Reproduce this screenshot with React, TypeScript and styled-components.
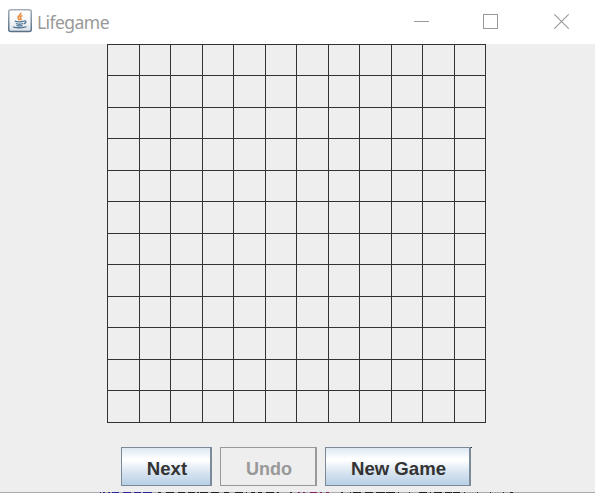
import React from "react";
import styled, { createGlobalStyle, css } from "styled-components";

const GlobalStyle = createGlobalStyle`
  html, body { margin: 0; padding: 0; overflow: hidden; background: #eee; }
`;

const Window = styled.div`
  display: flex;
  flex-direction: column;
  width: 595px;
  height: 493px;
  overflow: hidden;
  background: #eeeeee;
`;

const TitleBar = styled.header`
  display: flex;
  align-items: center;
  flex: 0 0 44px;
  box-sizing: border-box;
  height: 44px;
  padding-left: 8px;
  background: #fff;
`;

const JavaIcon = styled.svg`
  display: block;
  width: 24px;
  height: 24px;
  margin-top: -2px;
`;

const Title = styled.h1`
  flex: 1;
  margin: -1px 0 0 5px;
  font: 400 17.5px/24px "Noto Sans", "Open Sans", sans-serif;
  letter-spacing: -0.55px;
  color: #999;
`;

const WindowControls = styled.div`
  display: flex;
  height: 44px;
`;

const ControlButton = styled.button<{ $width: number }>`
  display: flex;
  align-items: center;
  justify-content: center;
  width: ${(p) => p.$width}px;
  height: 43px;
  padding: 0;
  border: 0;
  background: none;
  color: #999;
`;

const Board = styled.main`
  display: grid;
  grid-template-columns: repeat(6, 32px 31px);
  grid-template-rows: repeat(6, 31px 32px);
  align-self: flex-start;
  margin-left: 107px;
  border-right: 1px solid #333;
  border-bottom: 1px solid #333;
`;

const Cell = styled.div`
  border-left: 1px solid #333;
  border-top: 1px solid #333;
`;

const Actions = styled.div`
  display: flex;
  gap: 8px;
  margin: 24px 0 0 121px;
`;

const ActionButton = styled.button<{ $width: number }>`
  box-sizing: border-box;
  width: ${(p) => p.$width}px;
  height: 39px;
  padding: 5px 0 0 2px;
  border: 1px solid #7a8a99;
  border-right-width: 2px;
  border-radius: 0;
  background: linear-gradient(#dde8f3 0%, #ffffff 30%, #ffffff 33%, #dbe7f2 62%, #b8cfe5 100%);
  color: #333;
  font: bold 18.6px/20px "Liberation Sans", Arial, sans-serif;
  white-space: nowrap;
  ${(p) =>
    p.disabled &&
    css`
      border-color: #999;
      background: #eee;
      color: #999;
      font-size: 18px;
    `}
`;

const CornerDot = styled.span`
  width: 1px;
  height: 1px;
  margin-left: -8px;
  background: #222;
`;

const BottomEdge = styled.svg`
  display: block;
  flex: none;
  margin-top: auto;
`;

const cells = Array.from({ length: 144 }, (_, i) => i);

type Mark = [start: number, length: number];

const blueMarks: Mark[] = [[100, 1], [103, 2], [108, 2], [112, 7], [123, 8], [134, 7], [143, 9]];
const darkMarks: Mark[] = [
  [158, 3], [166, 8], [178, 7], [188, 7], [197, 2], [200, 8], [211, 8], [224, 5], [235, 8],
  [246, 1], [251, 4], [258, 4], [266, 8], [277, 2], [290, 2], [341, 2], [350, 1], [353, 8],
  [365, 8], [376, 9], [386, 9], [398, 1], [409, 1], [419, 8], [430, 1], [434, 8], [445, 7],
  [453, 7], [464, 1], [477, 1], [490, 1], [503, 1], [510, 3],
];
const wineMarks: Mark[] = [[298, 2], [303, 2], [310, 7], [320, 2], [326, 3]];

const toPath = (marks: Mark[]) => marks.map(([x, w]) => `M${x} .5h${w}`).join("");

export default function App() {
  return (
    <Window>
      <GlobalStyle />
      <TitleBar>
        <JavaIcon viewBox="0 0 24 24" fill="none">
          <defs>
            <linearGradient id="tile" x2="0" y2="1">
              <stop stopColor="#fff" />
              <stop offset=".5" stopColor="#f7f8fa" />
              <stop offset="1" stopColor="#d9dee5" />
            </linearGradient>
            <linearGradient id="rim" x2="0" y2="1">
              <stop stopColor="#a4adb8" />
              <stop offset="1" stopColor="#587087" />
            </linearGradient>
          </defs>
          <rect x=".75" y=".75" width="22.5" height="21.75" rx="2" fill="url(#tile)" stroke="url(#rim)" strokeWidth="1.5" />
          <path d="M12.7 3.6c1 2.3-3.6 3.2-2.5 5.7.3.8 1.1 1.4 1.5 2M14.5 6.6c-2.4 1-2.7 2-1.7 3 .5.7.2 1.2-.4 1.6" stroke="#ed8a40" strokeWidth="1.6" />
          <path d="M6.8 12.2c2 .9 7 .9 9 0M7.8 14.5c2 .8 5.4.8 7.2 0M8.5 16.3c1.8.7 4.3.7 6 0M16 12.1c2.7-.8 2.5 2-.3 2.7M5.5 17.6c-1 1.5 10.5 1.6 13-.1" stroke="#4f7594" strokeWidth="1.3" />
        </JavaIcon>
        <Title>Lifegame</Title>
        <WindowControls>
          <ControlButton $width={63} aria-label="Minimize">
            <svg width="15" height="15" shapeRendering="crispEdges"><path d="M0 7.5h15" stroke="currentColor" /></svg>
          </ControlButton>
          <ControlButton $width={75} aria-label="Maximize">
            <svg width="15" height="15" shapeRendering="crispEdges"><path d="M.5.5h14v14H.5z" fill="none" stroke="currentColor" /></svg>
          </ControlButton>
          <ControlButton $width={67} aria-label="Close">
            <svg width="15" height="15"><path d="m.3.3 14.4 14.4m0-14.4L.3 14.7" stroke="currentColor" strokeWidth="1.1" /></svg>
          </ControlButton>
        </WindowControls>
      </TitleBar>
      <Board>{cells.map((i) => <Cell key={i} />)}</Board>
      <Actions>
        <ActionButton $width={91}>Next</ActionButton>
        <ActionButton $width={97} disabled>Undo</ActionButton>
        <ActionButton $width={146}>New Game</ActionButton>
        <CornerDot />
      </Actions>
      <BottomEdge width="595" height="1" shapeRendering="crispEdges">
        <path d="M0 .5h595" stroke="#aaa" />
        <path d={toPath(blueMarks)} stroke="#2a2299" />
        <path d={toPath(darkMarks)} stroke="#222" />
        <path d={toPath(wineMarks)} stroke="#7f2260" />
      </BottomEdge>
    </Window>
  );
}
